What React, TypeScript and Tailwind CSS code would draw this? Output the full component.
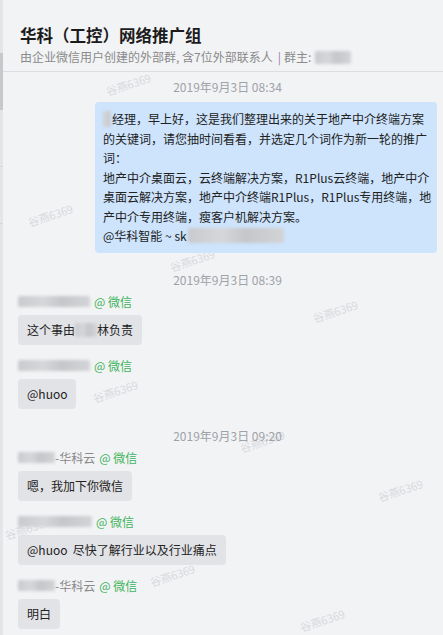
import React from "react";

const FONT = { fontFamily: '"Noto Sans CJK SC", "Noto Sans", sans-serif' };

const marks: [number, number][] = [
  [128, 84],
  [50, 215],
  [192, 260],
  [335, 311],
  [115, 391],
  [262, 441],
  [400, 490],
  [27, 528],
  [172, 575],
  [322, 620],
];

function Blur({ w, h = 12, className = "" }: { w: number; h?: number; className?: string }) {
  return (
    <span
      className={"inline-block align-middle rounded-[2px] bg-[linear-gradient(90deg,#c9cacd,#d6d7da_35%,#c5c6c9_60%,#d3d4d7)] blur-[1.5px] " + className}
      style={{ width: w, height: h }}
    />
  );
}

function Stamp({ t, className = "" }: { t: string; className?: string }) {
  return (
    <div className={"text-center text-[12px] leading-[16px] text-[#9ea2a9] " + className}>{t}</div>
  );
}

function Name({ blur, suffix }: { blur: number; suffix?: string }) {
  return (
    <div className="flex items-center h-[16px] text-[12px] leading-[16px]">
      <Blur w={blur} h={11} />
      {suffix && <span className="text-[#8a8a8a]">{suffix}</span>}
      <span className="ml-[4px] text-[#3fb35c]">@ 微信</span>
    </div>
  );
}

function Bubble({ children }: { children: React.ReactNode }) {
  return (
    <div className="self-start mt-[5px] rounded-[4px] bg-[#e2e3e7] px-[9px] py-[7px] text-[12px] leading-[16px] text-[#222] whitespace-nowrap">
      {children}
    </div>
  );
}

export default function App() {
  return (
    <div className="relative flex h-[635px] w-[443px] overflow-hidden bg-[#f2f3f5]" style={FONT}>
      {/* left strip */}
      <div className="flex w-[3px] flex-col bg-[#e4e5e8]">
        <div className="h-[53px]" />
        <div className="h-[57px] bg-[#c7c8cb]" />
        <div className="h-[57px] border-b border-[#d6d7da]" />
        <div className="h-[57px] border-b border-[#d6d7da]" />
      </div>

      {/* watermarks */}
      <div className="pointer-events-none absolute inset-0">
        {marks.map(([x, y], i) => (
          <span
            key={i}
            className="absolute -rotate-[18deg] whitespace-nowrap text-[11px] leading-[14px] text-[#d8d9dd]"
            style={{ left: x - 23, top: y - 7 }}
          >
            谷燕6369
          </span>
        ))}
      </div>

      <div className="relative flex flex-1 flex-col">
        {/* header */}
        <div className="h-[72px] border-b border-[#dcdde0] pl-[17px] pt-[23px]">
          <div className="text-[16.5px] font-bold leading-[24px] text-[#1b1b1b]">华科（工控）网络推广组</div>
          <div className="mt-[2px] flex items-center text-[12px] leading-[16px] text-[#8a8a8a]">
            <span>由企业微信用户创建的外部群, 含7位外部联系人</span>
            <span className="ml-[5px] mr-[3px] text-[#8f7fb0]">|</span>
            <span>群主:</span>
            <Blur w={36} h={13} className="ml-[4px]" />
          </div>
        </div>

        {/* chat */}
        <div className="flex flex-col pl-[15px] pr-[6px]">
          <Stamp t="2019年9月3日 08:34" className="mt-[7px]" />
          <div className="mt-[7px] w-[342px] self-end rounded-[4px] bg-[#cde4fc] px-[8px] py-[7px] text-[12px] leading-[19.5px] text-[#222] whitespace-nowrap">
            <div className="flex items-center">
              <Blur w={8} h={16} className="mr-[1px]" />
              <span>经理，早上好，这是我们整理出来的关于地产中介终端方案</span>
            </div>
            <div>的关键词，请您抽时间看看，并选定几个词作为新一轮的推广</div>
            <div>词：</div>
            <div>地产中介桌面云，云终端解决方案，R1Plus云终端，地产中介</div>
            <div>桌面云解决方案，地产中介终端R1Plus，R1Plus专用终端，地</div>
            <div>产中介专用终端，瘦客户机解决方案。</div>
            <div className="flex items-center">
              <span>@华科智能 ~ sk</span>
              <Blur w={96} h={15} className="ml-[1px]" />
            </div>
          </div>

          <Stamp t="2019年9月3日 08:39" className="mt-[19px]" />
          <div className="mt-[6px] flex flex-col">
            <Name blur={72} />
            <Bubble>
              <span className="inline-flex items-center">
                这个事由
                <Blur w={22} h={14} />
                林负责
              </span>
            </Bubble>
          </div>
          <div className="mt-[13px] flex flex-col">
            <Name blur={72} />
            <Bubble>@huoo</Bubble>
          </div>

          <Stamp t="2019年9月3日 09:20" className="mt-[19px]" />
          <div className="mt-[6px] flex flex-col">
            <Name blur={37} suffix="-华科云" />
            <Bubble>嗯，我加下你微信</Bubble>
          </div>
          <div className="mt-[13px] flex flex-col">
            <Name blur={74} />
            <Bubble>@huoo&nbsp;&nbsp;尽快了解行业以及行业痛点</Bubble>
          </div>
          <div className="mt-[13px] flex flex-col">
            <Name blur={37} suffix="-华科云" />
            <Bubble>明白</Bubble>
          </div>
        </div>
      </div>
    </div>
  );
}
